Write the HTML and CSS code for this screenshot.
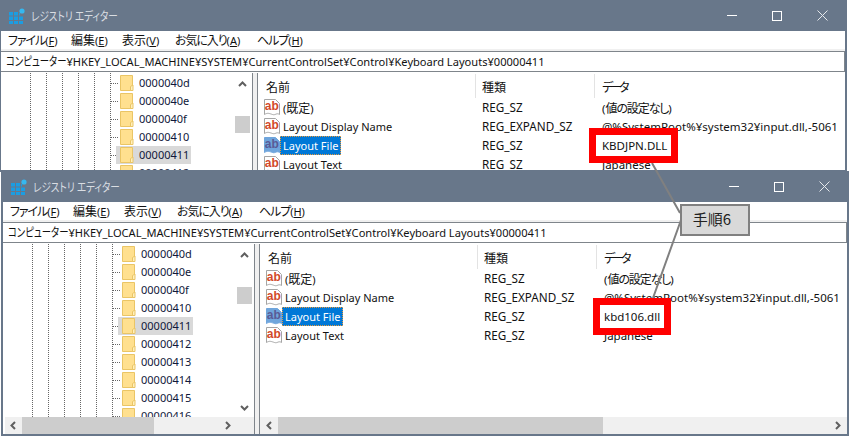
FILE: index.html
```html
<!DOCTYPE html>
<html lang="ja">
<head>
    <meta charset="UTF-8">
    <title>レジストリ エディター</title>
    <link rel="stylesheet" href="styles.css">
</head>
<body>
    <svg class="defs" width="0" height="0">
        <symbol id="app-icon" viewBox="0 0 16 16">
            <path fill="#1b9de2" d="M0 4h4v3.500H0zM5 4h4v3.500H5zM0 8.500h4V12H0zM5 8.500h4V12H5zM10 8.500h4V12h-4zM0 13h4v3H0zM5 13h4v3H5zM10 13h4v3h-4zM10 5h1v2.500h-1z"/>
            <circle cx="13" cy="3" r="2.600" fill="#35b8f0"/>
        </symbol>
        <symbol id="folder" viewBox="0 0 14 16">
            <path fill="#ffe08f" stroke="#eac565" d="M.5.500h12v15H.5z"/>
            <path fill="#fff0bd" stroke="#eac565" d="M10.500 15.500v-4l2.500-1.500v5.500z"/>
        </symbol>
    </svg>

    <!-- back window -->
    <section class="window window-back">
        <header class="titlebar">
            <svg class="app-icon"><use href="#app-icon"/></svg>
            <span class="title">レジストリ エディター</span>
            <div class="caption-btns">
                <span class="cap-min"></span>
                <span class="cap-max"></span>
                <svg class="cap-close" viewBox="0 0 11 11"><path d="M.5.500l10 10M10.500.500l-10 10"/></svg>
            </div>
        </header>
        <nav class="menu">
            <span class="m-file"><span class="ja kana">ファイル</span>(<u>F</u>)</span>
            <span class="m-edit"><span class="ja">編集</span>(<u>E</u>)</span>
            <span class="m-view"><span class="ja">表示</span>(<u>V</u>)</span>
            <span class="m-fav"><span class="ja kana">お気に入り</span>(<u>A</u>)</span>
            <span><span class="ja kana">ヘルプ</span>(<u>H</u>)</span>
        </nav>
        <div class="address"><span class="ja">コンピューター</span>¥HKEY_LOCAL_MACHINE¥SYSTEM¥CurrentControlSet¥Control¥Keyboard Layouts¥00000411</div>
        <div class="panes">
            <div class="tree-pane">
                <div class="tree-main">
                    <ul class="tree">
                        <li><svg class="folder"><use href="#folder"/></svg><span>0000040d</span></li>
                        <li><svg class="folder"><use href="#folder"/></svg><span>0000040e</span></li>
                        <li><svg class="folder"><use href="#folder"/></svg><span>0000040f</span></li>
                        <li><svg class="folder"><use href="#folder"/></svg><span>00000410</span></li>
                        <li class="current"><svg class="folder"><use href="#folder"/></svg><span>00000411</span></li>
                        <li><svg class="folder"><use href="#folder"/></svg><span>00000412</span></li>
                    </ul>
                    <div class="vscroll">
                        <svg class="arrow" viewBox="0 0 9 6"><path d="M1 5l3.500-3.500L8 5"/></svg>
                        <div class="vthumb"></div>
                    </div>
                </div>
            </div>
            <div class="splitter"></div>
            <div class="list-pane">
                <div class="list-head">
                    <span class="col-name ja">名前</span>
                    <span class="col-type ja">種類</span>
                    <span class="col-data ja">データ</span>
                </div>
                <div class="list-row">
                    <span class="cell-name"><svg class="reg" viewBox="0 0 16 17"><path class="reg-page" d="M.5.500h11l4 4v11c-3-2-4 1-7 0s-5-2-8 0z"/><text class="reg-ab" x=".8" y="11">ab</text></svg><span class="label">(<span class="ja">既定</span>)</span></span>
                    <span class="cell-type">REG_SZ</span>
                    <span class="cell-data">(<span class="ja kana">値の設定なし</span>)</span>
                </div>
                <div class="list-row">
                    <span class="cell-name"><svg class="reg" viewBox="0 0 16 17"><path class="reg-page" d="M.5.500h11l4 4v11c-3-2-4 1-7 0s-5-2-8 0z"/><text class="reg-ab" x=".8" y="11">ab</text></svg><span class="label">Layout Display Name</span></span>
                    <span class="cell-type">REG_EXPAND_SZ</span>
                    <span class="cell-data">@%SystemRoot%¥system32¥input.dll,-5061</span>
                </div>
                <div class="list-row selected">
                    <span class="cell-name"><svg class="reg" viewBox="0 0 16 17"><path class="reg-page" d="M.5.500h11l4 4v11c-3-2-4 1-7 0s-5-2-8 0z"/><text class="reg-ab" x=".8" y="11">ab</text></svg><span class="label">Layout File</span></span>
                    <span class="cell-type">REG_SZ</span>
                    <span class="cell-data">KBDJPN.DLL</span>
                </div>
                <div class="list-row">
                    <span class="cell-name"><svg class="reg" viewBox="0 0 16 17"><path class="reg-page" d="M.5.500h11l4 4v11c-3-2-4 1-7 0s-5-2-8 0z"/><text class="reg-ab" x=".8" y="11">ab</text></svg><span class="label">Layout Text</span></span>
                    <span class="cell-type">REG_SZ</span>
                    <span class="cell-data">Japanese</span>
                </div>
            </div>
        </div>
    </section>

    <!-- front window -->
    <section class="window window-front">
        <header class="titlebar">
            <svg class="app-icon"><use href="#app-icon"/></svg>
            <span class="title">レジストリ エディター</span>
            <div class="caption-btns">
                <span class="cap-min"></span>
                <span class="cap-max"></span>
                <svg class="cap-close" viewBox="0 0 11 11"><path d="M.5.500l10 10M10.500.500l-10 10"/></svg>
            </div>
        </header>
        <nav class="menu">
            <span class="m-file"><span class="ja kana">ファイル</span>(<u>F</u>)</span>
            <span class="m-edit"><span class="ja">編集</span>(<u>E</u>)</span>
            <span class="m-view"><span class="ja">表示</span>(<u>V</u>)</span>
            <span class="m-fav"><span class="ja kana">お気に入り</span>(<u>A</u>)</span>
            <span><span class="ja kana">ヘルプ</span>(<u>H</u>)</span>
        </nav>
        <div class="address"><span class="ja">コンピューター</span>¥HKEY_LOCAL_MACHINE¥SYSTEM¥CurrentControlSet¥Control¥Keyboard Layouts¥00000411</div>
        <div class="panes">
            <div class="tree-pane">
                <div class="tree-main">
                    <ul class="tree">
                        <li><svg class="folder"><use href="#folder"/></svg><span>0000040d</span></li>
                        <li><svg class="folder"><use href="#folder"/></svg><span>0000040e</span></li>
                        <li><svg class="folder"><use href="#folder"/></svg><span>0000040f</span></li>
                        <li><svg class="folder"><use href="#folder"/></svg><span>00000410</span></li>
                        <li class="current"><svg class="folder"><use href="#folder"/></svg><span>00000411</span></li>
                        <li><svg class="folder"><use href="#folder"/></svg><span>00000412</span></li>
                        <li><svg class="folder"><use href="#folder"/></svg><span>00000413</span></li>
                        <li><svg class="folder"><use href="#folder"/></svg><span>00000414</span></li>
                        <li><svg class="folder"><use href="#folder"/></svg><span>00000415</span></li>
                        <li><svg class="folder"><use href="#folder"/></svg><span>00000416</span></li>
                    </ul>
                    <div class="vscroll">
                        <svg class="arrow" viewBox="0 0 9 6"><path d="M1 5l3.500-3.500L8 5"/></svg>
                        <div class="vthumb"></div>
                        <svg class="arrow arrow-down" viewBox="0 0 9 6"><path d="M1 1l3.500 3.500L8 1"/></svg>
                    </div>
                </div>
                <div class="hscroll tree-hscroll">
                    <svg class="harrow" viewBox="0 0 6 9"><path d="M5 1L1.500 4.500 5 8"/></svg>
                    <div class="hthumb tree-thumb"></div>
                    <svg class="harrow harrow-right" viewBox="0 0 6 9"><path d="M1 1l3.500 3.500L1 8"/></svg>
                </div>
            </div>
            <div class="splitter"></div>
            <div class="list-pane">
                <div class="list-head">
                    <span class="col-name ja">名前</span>
                    <span class="col-type ja">種類</span>
                    <span class="col-data ja">データ</span>
                </div>
                <div class="list-row">
                    <span class="cell-name"><svg class="reg" viewBox="0 0 16 17"><path class="reg-page" d="M.5.500h11l4 4v11c-3-2-4 1-7 0s-5-2-8 0z"/><text class="reg-ab" x=".8" y="11">ab</text></svg><span class="label">(<span class="ja">既定</span>)</span></span>
                    <span class="cell-type">REG_SZ</span>
                    <span class="cell-data">(<span class="ja kana">値の設定なし</span>)</span>
                </div>
                <div class="list-row">
                    <span class="cell-name"><svg class="reg" viewBox="0 0 16 17"><path class="reg-page" d="M.5.500h11l4 4v11c-3-2-4 1-7 0s-5-2-8 0z"/><text class="reg-ab" x=".8" y="11">ab</text></svg><span class="label">Layout Display Name</span></span>
                    <span class="cell-type">REG_EXPAND_SZ</span>
                    <span class="cell-data">@%SystemRoot%¥system32¥input.dll,-5061</span>
                </div>
                <div class="list-row selected">
                    <span class="cell-name"><svg class="reg" viewBox="0 0 16 17"><path class="reg-page" d="M.5.500h11l4 4v11c-3-2-4 1-7 0s-5-2-8 0z"/><text class="reg-ab" x=".8" y="11">ab</text></svg><span class="label">Layout File</span></span>
                    <span class="cell-type">REG_SZ</span>
                    <span class="cell-data">kbd106.dll</span>
                </div>
                <div class="list-row">
                    <span class="cell-name"><svg class="reg" viewBox="0 0 16 17"><path class="reg-page" d="M.5.500h11l4 4v11c-3-2-4 1-7 0s-5-2-8 0z"/><text class="reg-ab" x=".8" y="11">ab</text></svg><span class="label">Layout Text</span></span>
                    <span class="cell-type">REG_SZ</span>
                    <span class="cell-data">Japanese</span>
                </div>
                <div class="list-spacer"></div>
                <div class="hscroll">
                    <svg class="harrow list-arrow" viewBox="0 0 6 9"><path d="M5 1L1.500 4.500 5 8"/></svg>
                    <div class="hthumb list-thumb"></div>
                    <svg class="harrow list-arrow-right" viewBox="0 0 6 9"><path d="M1 1l3.500 3.500L1 8"/></svg>
                </div>
            </div>
        </div>
    </section>

    <!-- annotations -->
    <svg class="leaders" viewBox="0 0 849 436">
        <path d="M652 163l28 50M681 220l-28 78"/>
    </svg>
    <div class="red-box box-back"></div>
    <div class="red-box box-front"></div>
    <div class="callout">手順6</div>
</body>
</html>
```

FILE: styles.css
```css
* {
    box-sizing: border-box;
}

body {
    margin: 0;
    width: 849px;
    height: 436px;
    position: relative;
    overflow: hidden;
    background: #fff;
    font-family: "Noto Sans", "Noto Sans CJK JP", sans-serif;
    font-size: 11px;
    font-feature-settings: "palt";
    color: #111;
}

.ja {
    font-family: "Noto Sans CJK JP", sans-serif;
    font-size: 12px;
}

.kana {
    letter-spacing: -1.100px;
}

.defs {
    position: absolute;
}

.window {
    position: absolute;
    display: flex;
    flex-direction: column;
    overflow: hidden;
    background: #fff;
    border: solid #68778a;
    border-width: 0 2px 2px;
}

.window-back {
    left: 0;
    top: 0;
    width: 847px;
    height: 172px;
    border-left-width: 1px;
}

.window-front {
    left: 1px;
    top: 171px;
    width: 848px;
    height: 265px;
}

.titlebar {
    flex: none;
    height: 31px;
    display: flex;
    align-items: center;
    background: #68778a;
    color: #d9dde2;
}

.app-icon {
    width: 16px;
    height: 16px;
    margin: 0 6px 0 8px;
}

/* Meiryo UI style narrow kana */
.title {
    font-family: "Noto Sans CJK JP", sans-serif;
    font-size: 12px;
    transform: scaleX(0.8);
    transform-origin: left center;
}

.caption-btns {
    margin-left: auto;
    display: flex;
    align-items: center;
    gap: 35px;
    padding-right: 17px;
}

.cap-min {
    width: 10px;
    height: 1px;
    background: #fff;
}

.cap-max {
    width: 10px;
    height: 10px;
    border: 1px solid #fff;
}

.cap-close {
    width: 11px;
    height: 11px;
    stroke: #e6e9ec;
    fill: none;
}

.menu {
    flex: none;
    height: 20px;
    display: flex;
    padding-left: 7px;
    line-height: 18px;
    background: #fff;
    border-bottom: 2px solid #f0f0f0;
}

.m-file { width: 63px; }
.m-edit { width: 51px; }
.m-view { width: 53px; }
.m-fav { width: 82px; }

.address {
    flex: none;
    height: 21px;
    margin-bottom: 1px;
    line-height: 18px;
    padding-left: 5px;
    font-size: 11.100px;
    white-space: nowrap;
    border: solid #7f858b;
    border-width: 1px 1px 1px 0;
}

.address .ja {
    display: inline-block;
    transform: scaleX(0.78);
    transform-origin: left center;
    margin-right: -17px;
}

.panes {
    flex: 1;
    min-height: 0;
    display: flex;
}

.tree-pane {
    flex: none;
    width: 251px;
    display: flex;
    flex-direction: column;
}

.tree-main {
    flex: 1;
    min-height: 0;
    display: flex;
    overflow: hidden;
}

.tree {
    flex: 1;
    margin: 0;
    padding: 1px 0 0;
    list-style: none;
    overflow: hidden;
    position: relative;
}

/* dotted guides for the collapsed levels */
.tree::before {
    content: "";
    position: absolute;
    left: 29px;
    top: 0;
    bottom: 0;
    width: 81px;
    background:
        repeating-linear-gradient(to bottom, #666 0 1px, transparent 1px 2px) 0 0 / 1px 100% no-repeat,
        repeating-linear-gradient(to bottom, #666 0 1px, transparent 1px 2px) 16px 0 / 1px 100% no-repeat,
        repeating-linear-gradient(to bottom, #666 0 1px, transparent 1px 2px) 32px 0 / 1px 100% no-repeat,
        repeating-linear-gradient(to bottom, #666 0 1px, transparent 1px 2px) 48px 0 / 1px 100% no-repeat,
        repeating-linear-gradient(to bottom, #666 0 1px, transparent 1px 2px) 64px 0 / 1px 100% no-repeat,
        repeating-linear-gradient(to bottom, #666 0 1px, transparent 1px 2px) 80px 0 / 1px 100% no-repeat;
}

.tree li {
    height: 18px;
    display: flex;
    align-items: center;
    padding-left: 119px;
    position: relative;
}

.tree li::before {
    content: "";
    position: absolute;
    left: 110px;
    top: 9px;
    width: 7px;
    height: 1px;
    background: repeating-linear-gradient(to right, #666 0 1px, transparent 1px 2px);
}

.tree li span {
    height: 18px;
    line-height: 18px;
    padding-left: 5px;
    color: #10183a;
    white-space: nowrap;
    position: relative;
    z-index: 1;
}

.tree .current::after {
    content: "";
    position: absolute;
    left: 115px;
    width: 75px;
    top: 0;
    height: 18px;
    background: #d9d9d9;
}

.folder {
    flex: none;
    width: 14px;
    height: 16px;
    position: relative;
    z-index: 1;
}

.vscroll {
    flex: none;
    width: 15px;
    margin-right: 2px;
    position: relative;
    display: flex;
    flex-direction: column;
    align-items: center;
}

.arrow {
    flex: none;
    width: 9px;
    height: 6px;
    margin-top: 8px;
    stroke: #5f5f5f;
    stroke-width: 2;
    fill: none;
}

.arrow-down {
    margin-top: 0;
    position: absolute;
    bottom: 6px;
}

.vthumb {
    flex: none;
    width: 15px;
    height: 17px;
    margin-top: 29px;
    background: #cdcdcd;
}

.hscroll {
    flex: none;
    height: 17px;
    display: flex;
    align-items: center;
    position: relative;
    background: #f0f0f0;
}

.tree-hscroll {
    margin-left: 2px;
}

.harrow {
    position: absolute;
    left: 5px;
    top: 4px;
    width: 6px;
    height: 9px;
    stroke: #5f5f5f;
    stroke-width: 2;
    fill: none;
}

.harrow-right {
    left: auto;
    right: 23px;
}

.list-arrow {
    left: 6px;
}

.list-arrow-right {
    left: auto;
    right: 6px;
}

.hthumb {
    height: 17px;
    background: #cdcdcd;
}

.tree-thumb {
    width: 132px;
    margin-left: 17px;
}

.list-thumb {
    width: 325px;
    margin-left: 18px;
}

.splitter {
    flex: none;
    width: 6px;
    background: #f0f0f0;
    border: solid #7f858b;
    border-width: 0 1px;
}

.list-pane {
    flex: 1;
    min-width: 0;
    display: flex;
    flex-direction: column;
}

.list-head {
    flex: none;
    height: 25px;
    padding-top: 1px;
    display: flex;
}

.list-head span {
    height: 24px;
    line-height: 25px;
    padding-left: 7px;
}

.list-head .col-name {
    width: 218px;
    padding-left: 8px;
    border-right: 1px solid #e3e3e3;
}

.list-head .col-type {
    width: 119px;
    padding-left: 6px;
    border-right: 1px solid #e3e3e3;
}

.list-head .col-data {
    letter-spacing: -3px;
}

.list-row {
    flex: none;
    height: 19px;
    display: flex;
    align-items: center;
    white-space: nowrap;
}

.cell-name {
    width: 218px;
    display: flex;
    align-items: center;
    padding-left: 6px;
}

.cell-type {
    width: 119px;
    padding-left: 6px;
    font-size: 11.700px;
    line-height: 21px;
}

.cell-data {
    padding-left: 7px;
    font-size: 11.500px;
    line-height: 21px;
}

.label {
    height: 19px;
    line-height: 20px;
    padding: 0 3px;
}

.reg {
    flex: none;
    width: 16px;
    height: 17px;
}

.reg-page {
    fill: #fff;
    stroke: #a5a5a5;
}

.reg-ab {
    font-family: "Liberation Sans", sans-serif;
    font-size: 12px;
    font-weight: bold;
    fill: #d2492a;
}

.selected .label {
    background: #0078d7;
    color: #fff;
    outline: 1px dotted #e89a3c;
    outline-offset: -1px;
}

.selected .reg-page {
    fill: #6fa5dc;
    stroke: #6fa5dc;
}

.selected .reg-ab {
    fill: #5a5a96;
}

.list-spacer {
    flex: 1;
}

.leaders {
    position: absolute;
    inset: 0;
    width: 849px;
    height: 436px;
    stroke: #808080;
    stroke-width: 2;
    fill: none;
}

.red-box {
    position: absolute;
    border: 7px solid #ff0000;
}

.box-back {
    left: 589px;
    top: 128px;
    width: 89px;
    height: 35px;
}

.box-front {
    left: 593px;
    top: 298px;
    width: 78px;
    height: 37px;
}

.callout {
    position: absolute;
    left: 680px;
    top: 204px;
    width: 70px;
    height: 32px;
    padding-right: 6px;
    border: 2px solid #808080;
    background: #d9d9d9;
    font-family: "Noto Sans CJK JP", sans-serif;
    font-size: 15px;
    line-height: 26px;
    text-align: center;
    color: #222;
}
```
